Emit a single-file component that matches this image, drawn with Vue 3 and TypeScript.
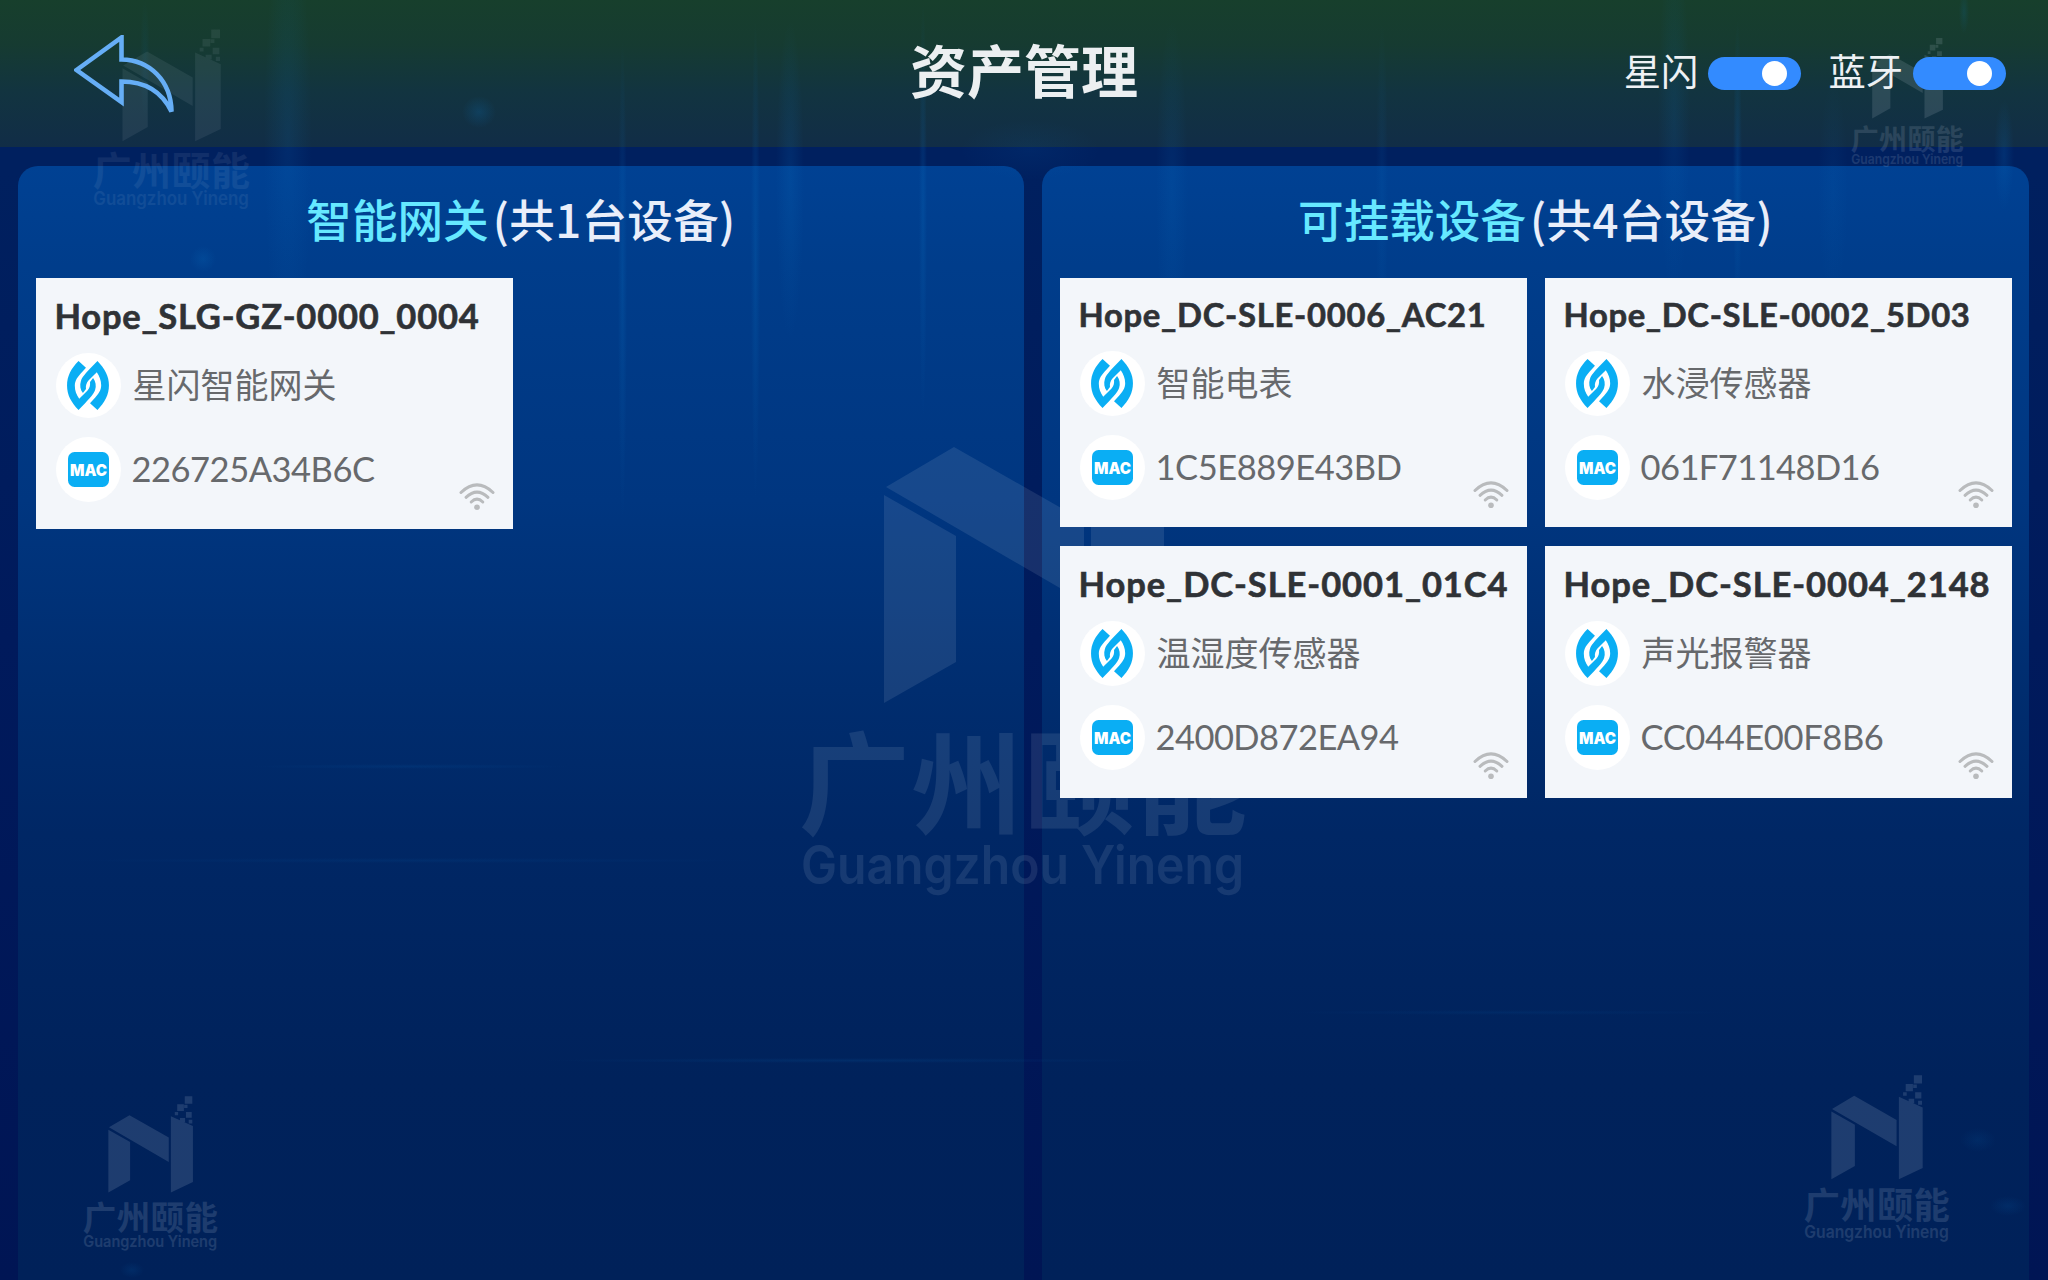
<script setup lang="ts">
import { reactive, type Directive } from 'vue'

interface Device {
  name: string
  nameWidth: number
  kind: string
  mac: string
  macWidth: number
}

interface Group {
  key: string
  label: string
  devices: Device[]
}

const groups: Group[] = [
  {
    key: 'gateway',
    label: '智能网关',
    devices: [
      { name: 'Hope_SLG-GZ-0000_0004', nameWidth: 425, kind: '星闪智能网关', mac: '226725A34B6C', macWidth: 243 },
    ],
  },
  {
    key: 'mountable',
    label: '可挂载设备',
    devices: [
      { name: 'Hope_DC-SLE-0006_AC21', nameWidth: 408, kind: '智能电表', mac: '1C5E889E43BD', macWidth: 246 },
      { name: 'Hope_DC-SLE-0002_5D03', nameWidth: 407, kind: '水浸传感器', mac: '061F71148D16', macWidth: 239 },
      { name: 'Hope_DC-SLE-0001_01C4', nameWidth: 430, kind: '温湿度传感器', mac: '2400D872EA94', macWidth: 243 },
      { name: 'Hope_DC-SLE-0004_2148', nameWidth: 427, kind: '声光报警器', mac: 'CC044E00F8B6', macWidth: 243 },
    ],
  },
]

const switches = reactive([
  { label: '星闪', on: true },
  { label: '蓝牙', on: true },
])

// Brand marks: left, top, scale, opacity
const marks = [
  { x: 92.5, y: 27.6, s: 0.351, o: 0.08 },
  { x: 1851, y: 36.8, s: 0.2525, o: 0.13 },
  { x: 800, y: 380, s: 1, o: 0.105 },
  { x: 83, y: 1094.8, s: 0.302, o: 0.14 },
  { x: 1804, y: 1074, s: 0.326, o: 0.14 },
]

// Soft lights of the backdrop: left, top, width, height, opacity
const lights = [
  { x: 264, y: -80, w: 48, h: 440, o: 0.13 },
  { x: 140, y: 0, w: 10, h: 120, o: 0.08 },
  { x: 618, y: 40, w: 9, h: 480, o: 0.2 },
  { x: 751, y: 20, w: 9, h: 480, o: 0.2 },
  { x: 776, y: 20, w: 28, h: 320, o: 0.15 },
  { x: 919, y: 0, w: 8, h: 420, o: 0.2 },
  { x: 1156, y: 20, w: 32, h: 340, o: 0.12 },
  { x: 1376, y: 20, w: 12, h: 340, o: 0.1 },
  { x: 1658, y: -60, w: 32, h: 360, o: 0.12 },
  { x: 1733, y: 20, w: 9, h: 300, o: 0.2 },
  { x: 1818, y: 80, w: 30, h: 220, o: 0.08 },
  { x: 1994, y: 100, w: 20, h: 110, o: 0.18 },
  { x: 1959, y: -10, w: 10, h: 44, o: 0.14 },
  { x: 462, y: 96, w: 34, h: 32, o: 0.2 },
  { x: 190, y: 246, w: 26, h: 26, o: 0.18 },
  { x: 960, y: 120, w: 140, h: 60, o: 0.08 },
  { x: 540, y: 1058, w: 620, h: 5, o: 0.12 },
  { x: 60, y: 858, w: 700, h: 5, o: 0.08 },
  { x: 250, y: 764, w: 320, h: 5, o: 0.1 },
  { x: 1280, y: 1010, w: 460, h: 5, o: 0.08 },
  { x: 120, y: 1262, w: 24, h: 16, o: 0.12 },
  { x: 1990, y: 1196, w: 36, h: 20, o: 0.12 },
  { x: 1960, y: 1128, w: 36, h: 24, o: 0.1 },
]

// Spreads the letters of a single line so that it takes the given width
const vFit: Directive<HTMLElement, number> = {
  mounted(el, { value }) {
    const count = el.textContent?.trim().length ?? 1
    const extra = (value - el.getBoundingClientRect().width) / count
    el.style.letterSpacing = `${extra.toFixed(3)}px`
  },
}

// One link of the emblem; the second one is the same link turned by 180 degrees
const link =
  'M34 0 L56 20 L46 31 C30 48 23 58 23 73 C23 88 28 100 36 112 L60 88 C67 80 69 72 68 62 L77 50 C85 60 87 73 83 86 C79 100 60 118 34 145 C12 122 0 100 0 73 C0 45 12 22 34 0 Z'
</script>

<template>
  <div class="screen">
    <header class="bar">
      <button class="back" aria-label="返回">
        <svg width="100" height="79" viewBox="0 0 100 79">
          <path d="M2.5 35 L47.500 2.500 V24.500 C76 25 97 46 97.500 76.500 C88 57 71 46.500 47.500 46.500 V67 Z" fill="none" stroke="#66aef6" stroke-width="4.600" />
        </svg>
      </button>
      <h1 class="title">资产管理</h1>
      <div class="switches">
        <label v-for="s in switches" :key="s.label" class="switch" @click="s.on = !s.on">
          <span class="switch-label">{{ s.label }}</span>
          <span class="track" :class="{ off: !s.on }"><i class="knob"></i></span>
        </label>
      </div>
    </header>

    <main class="columns">
      <section v-for="g in groups" :key="g.key" class="panel" :class="g.key">
        <h2 class="panel-title"><span class="accent">{{ g.label }}</span><span class="count">(共{{ g.devices.length }}台设备)</span></h2>
        <div class="cards">
          <article v-for="d in g.devices" :key="d.mac" class="card">
            <div class="name"><span v-fit="d.nameWidth">{{ d.name }}</span></div>
            <div class="row">
              <span class="disc">
                <svg width="42" height="49" viewBox="0 0 124 145" fill="#0aaef4">
                  <path :d="link" />
                  <path :d="link" transform="rotate(180 62 72.500)" />
                </svg>
              </span>
              <span class="kind">{{ d.kind }}</span>
            </div>
            <div class="row">
              <span class="disc">
                <svg width="41" height="35" viewBox="0 0 41 35">
                  <rect width="41" height="35" rx="6.500" fill="#0aaef4" />
                  <text x="2" y="24" textLength="37" lengthAdjust="spacingAndGlyphs" font-size="16" font-weight="900" fill="#fff" class="mac-mark">MAC</text>
                </svg>
              </span>
              <span class="mac"><span v-fit="d.macWidth">{{ d.mac }}</span></span>
            </div>
            <svg class="wifi" width="36" height="28" viewBox="0 0 36 28">
              <g fill="none" stroke="#b9bbbd" stroke-width="3" stroke-linecap="round">
                <path d="M2 9.500 Q18 -5.600 34 9.500" />
                <path d="M7 14.300 Q18 3.800 29 14.300" />
                <path d="M12.200 19 Q18 13.200 23.800 19" />
              </g>
              <circle cx="18" cy="24.200" r="2.800" fill="#b9bbbd" />
            </svg>
          </article>
        </div>
      </section>
    </main>

    <div class="decor" aria-hidden="true">
      <i
        v-for="(k, i) in lights"
        :key="i"
        class="light"
        :style="{ left: k.x + 'px', top: k.y + 'px', width: k.w + 'px', height: k.h + 'px', opacity: k.o }"
      ></i>
      <svg
        v-for="(m, i) in marks"
        :key="'m' + i"
        class="mark"
        viewBox="0 0 448 520"
        :width="448 * m.s"
        :height="520 * m.s"
        :style="{ left: m.x + 'px', top: m.y + 'px', opacity: m.o }"
      >
        <g fill="#d6e2ee">
          <path d="M86 107 L154 67 L284 141 V222 Z" />
          <path d="M84 115 L156 156 V282 L84 323 Z" />
          <path d="M291 70 L364 103 V288 L291 323 Z" />
          <path d="M337 4h25v25h-25zM312 31h22v22h-22zM335 32h11v11h-11zM341 56h19v19h-19zM304 56h11v11h-11zM321 76h17v14h-17zM350 82h12v12h-12z" />
          <text class="mark-cn" x="-1" y="446" textLength="448" font-size="111">广州颐能</text>
          <text class="mark-en" x="1" y="504" textLength="443" lengthAdjust="spacingAndGlyphs" font-size="53">Guangzhou Yineng</text>
        </g>
      </svg>
    </div>
  </div>
</template>

<style>
body {
  margin: 0;
  background: #001a58;
}
</style>

<style scoped>
.screen {
  position: relative;
  isolation: isolate;
  box-sizing: border-box;
  width: 2048px;
  height: 1280px;
  overflow: hidden;
  display: flex;
  flex-direction: column;
  background: linear-gradient(180deg, #00205f 0, #00205f 170px, #001a5c 50%, #001554 100%);
  font-family: Lato, 'Noto Sans CJK SC', sans-serif;
}

.bar {
  height: 147px;
  flex: none;
  display: grid;
  grid-template-columns: 1fr auto 1fr;
  align-items: center;
  background: linear-gradient(180deg, #173f2c 0, #163b31 30%, #123440 62%, #112d47 100%);
}

.back {
  position: relative;
  z-index: 2;
  justify-self: start;
  margin: 1px 0 0 74px;
  padding: 0;
  border: 0;
  background: none;
  display: flex;
}

.title {
  position: relative;
  z-index: 2;
  margin: 0 0 11px;
  font: 700 57px/1 'Noto Sans CJK SC', sans-serif;
  color: #eceff1;
}

.switches {
  position: relative;
  z-index: 2;
  display: flex;
  justify-content: flex-end;
  gap: 27px;
  padding-right: 42px;
}

.switch {
  display: flex;
  align-items: center;
  gap: 10px;
}

.switch-label {
  font: 400 37.300px/1 'Noto Sans CJK SC', sans-serif;
  color: #eef1f4;
  margin-top: -6px;
}

.track {
  box-sizing: border-box;
  width: 93px;
  height: 33px;
  padding: 0 14px;
  border-radius: 17px;
  background: #338bff;
  display: flex;
  align-items: center;
  justify-content: flex-end;
}

.track.off {
  background: #6b7785;
  justify-content: flex-start;
}

.knob {
  width: 25px;
  height: 25px;
  border-radius: 50%;
  background: #fff;
}

.columns {
  flex: 1;
  display: grid;
  grid-template-columns: 1006px 987px;
  gap: 18px;
  padding: 19px 19px 0 18px;
}

.panel {
  padding: 0 18px;
  border-radius: 20px 20px 0 0;
  background: linear-gradient(180deg, #004193 0, #003d8b 9%, #003680 30%, #002d6f 47%, #002765 60%, #00225b 82%, #002159 100%);
}

.panel-title {
  position: relative;
  z-index: 2;
  margin: 0;
  height: 112px;
  line-height: 104px;
  text-align: center;
  font-family: 'Noto Sans CJK SC', sans-serif;
  font-size: 45.600px;
  font-weight: 500;
  color: #e9eefa;
}

.accent {
  color: #66e8ff;
  margin-right: 4px;
}

.count {
  letter-spacing: 0.3px;
}

.cards {
  position: relative;
  z-index: 2;
  display: grid;
  gap: 19px 18px;
}

.gateway .cards {
  grid-template-columns: 476.500px;
}

.mountable .cards {
  grid-template-columns: 467px 467px;
  grid-template-rows: 249px 252px;
}

.card {
  position: relative;
  box-sizing: border-box;
  height: 251px;
  padding: 17px 18px 0 18.500px;
  background: #f3f6fa;
}

.mountable .card {
  height: auto;
}

.name {
  height: 58px;
  line-height: 42px;
  font-size: 34.500px;
  font-weight: 700;
  color: #2f3236;
  -webkit-text-stroke: 0.6px #2f3236;
  white-space: nowrap;
}

.mountable .card:nth-child(-n + 2) .name {
  height: 56px;
  line-height: 39px;
  font-size: 32.800px;
}

.row {
  display: flex;
  align-items: center;
  gap: 12px;
  height: 65px;
  margin-bottom: 19px;
}

.disc {
  flex: none;
  width: 65px;
  height: 65px;
  margin-left: 1px;
  border-radius: 50%;
  background: #fff;
  display: flex;
  align-items: center;
  justify-content: center;
}

.mac-mark {
  font-family: Inter, sans-serif;
}

.kind {
  font: 400 34px/1 'Noto Sans CJK SC', sans-serif;
  color: #67696c;
  margin-top: -4px;
}

.mac {
  font-size: 34.500px;
  line-height: 1;
  color: #67696c;
  margin: -1px 0 0 -1px;
  white-space: nowrap;
}

.wifi {
  position: absolute;
  right: 18px;
  bottom: 18px;
}

.decor {
  position: absolute;
  inset: 0;
  z-index: 1;
  pointer-events: none;
}

.light {
  position: absolute;
  background: radial-gradient(closest-side, #0a78c8, rgba(10, 120, 200, 0.5) 50%, rgba(10, 120, 200, 0));
}

.mark {
  position: absolute;
  overflow: visible;
}

.mark-cn {
  font-family: 'Noto Sans CJK SC', sans-serif;
  font-weight: 700;
}

.mark-en {
  font-family: Inter, sans-serif;
  font-weight: 600;
}
</style>
